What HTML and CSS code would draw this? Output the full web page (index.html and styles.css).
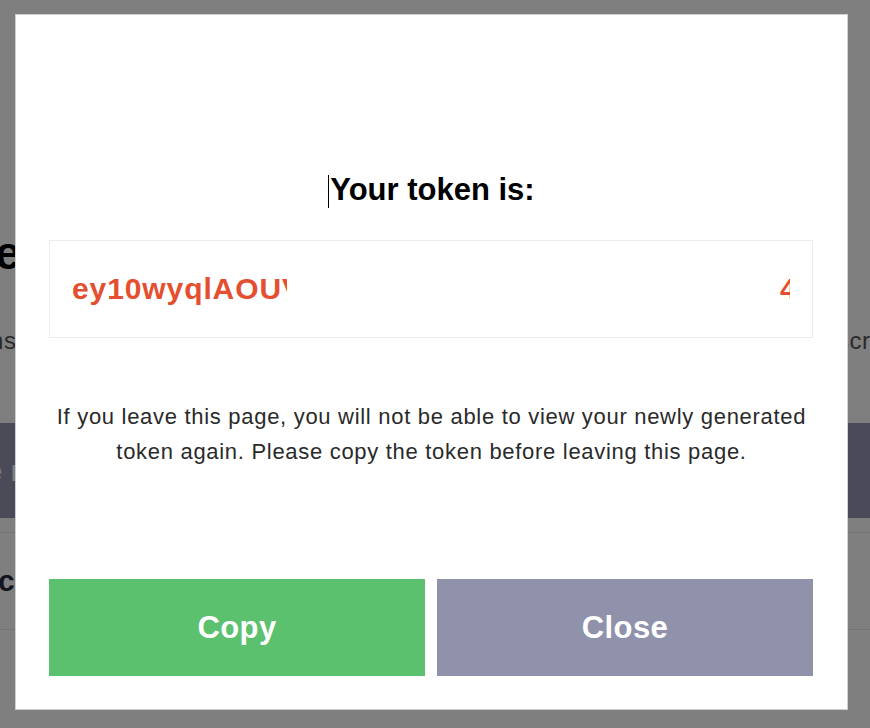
FILE: index.html
```html
<!DOCTYPE html>
<html>
<head>
<meta charset="utf-8">
<link rel="stylesheet" href="styles.css">
</head>
<body>
<div class="page">
  <h1 class="page-title">Access tokens</h1>
  <p class="page-sub">Personal access tokens let you authenticate with the API so that you can access the service from scripts and other tools</p>
  <div class="page-btn">Generate new token</div>
  <div class="page-row"><span class="row-name">cli-token</span></div>
  <div class="page-row"></div>
</div>
<div class="overlay">
  <div class="modal">
    <h2 class="modal-title"><span class="caret"></span>Your token is:</h2>
    <div class="token-box">
      <span class="token-left">ey10wyqlAOUVzX9pQ</span>
      <span class="token-right">4</span>
    </div>
    <p class="modal-text">If you leave this page, you will not be able to view your newly generated<br>token again. Please copy the token before leaving this page.</p>
    <div class="actions">
      <button class="btn btn-copy">Copy</button>
      <button class="btn btn-close">Close</button>
    </div>
  </div>
</div>
</body>
</html>
```
FILE: styles.css
```css
html, body {
  margin: 0;
  padding: 0;
  height: 100%;
  overflow: hidden;
  background: #fff;
  font-family: "Liberation Sans", Arial, sans-serif;
}
.page {
  margin-left: -248px;
  width: 1400px;
}
.page-title {
  margin: 0;
  padding-top: 228px;
  font-size: 46px;
  line-height: 50px;
  font-weight: bold;
  color: #000;
  white-space: nowrap;
}
.page-sub {
  margin: 0;
  padding-top: 48px;
  font-size: 24px;
  line-height: 30px;
  color: #555;
  white-space: nowrap;
  letter-spacing: 0.5px;
}
.page-btn {
  margin-top: 67px;
  height: 95px;
  background: #9494b0;
  color: #fff;
  font-weight: bold;
  font-size: 30px;
  line-height: 95px;
  padding-left: 120px;
}
.page-row {
  margin-top: 14px;
  height: 96px;
  border-top: 1px solid #e6e6e6;
  display: flex;
  align-items: center;
}
.page-row + .page-row { margin-top: 0; }
.row-name {
  padding-left: 246px;
  font-size: 30px;
  font-weight: bold;
  color: #2a2a44;
}
.overlay {
  position: fixed;
  inset: 0;
  background: rgba(0, 0, 0, 0.5);
}
.modal {
  position: absolute;
  left: 15px;
  top: 14px;
  width: 831px;
  height: 694px;
  background: #fff;
  border: 1px solid #cfcfcf;
  display: flex;
  flex-direction: column;
}
.modal-title {
  margin: 157px 0 0;
  text-align: center;
  font-size: 31px;
  line-height: 36px;
  font-weight: bold;
  color: #000;
}
.caret {
  display: inline-block;
  width: 1px;
  height: 33px;
  background: #000;
  vertical-align: -8px;
  margin-right: 1px;
}
.token-box {
  margin: 32px 34px 0 33px;
  height: 96px;
  border: 1px solid #ececec;
  display: flex;
  justify-content: space-between;
  align-items: center;
  padding: 0 22px;
  font-size: 30px;
  font-weight: bold;
  letter-spacing: 0.9px;
  color: #e4502f;
}
.token-left {
  display: block;
  width: 215px;
  overflow: hidden;
  white-space: nowrap;
}
.token-right {
  display: block;
  width: 10px;
  overflow: hidden;
  white-space: nowrap;
}
.modal-text {
  margin: 61px 20px 0;
  text-align: center;
  font-size: 22px;
  line-height: 35px;
  letter-spacing: 0.7px;
  color: #2a2a2a;
  white-space: nowrap;
}
.actions {
  margin: 110px 34px 0 33px;
  display: flex;
  gap: 12px;
}
.btn {
  flex: 1;
  height: 97px;
  border: 0;
  padding: 0;
  font-family: "Liberation Sans", Arial, sans-serif;
  font-size: 31px;
  font-weight: bold;
  letter-spacing: 0.4px;
  color: #fff;
  cursor: pointer;
}
.btn-copy { background: #5bc16e; }
.btn-close { background: #9091ab; }
```
